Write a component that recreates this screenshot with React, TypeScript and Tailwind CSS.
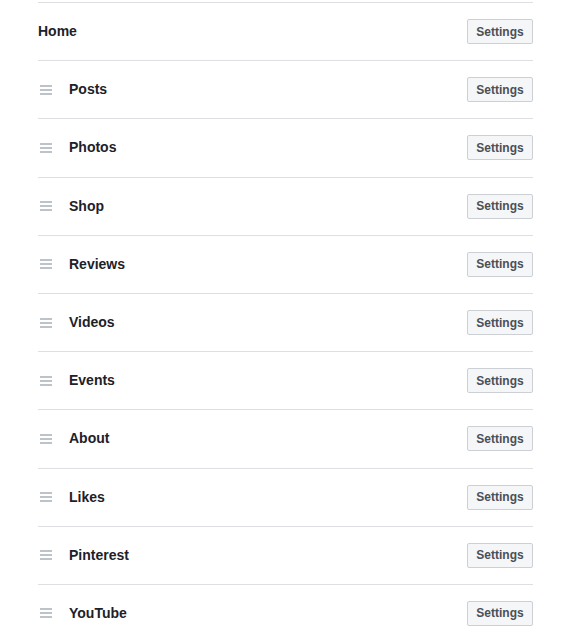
import React from 'react';

const tabs = ['Posts', 'Photos', 'Shop', 'Reviews', 'Videos', 'Events', 'About', 'Likes', 'Pinterest', 'YouTube'];

const DragHandle: React.FC = () => (
  <div className="flex w-3 flex-col gap-[2px]">
    <span className="h-[2px] bg-[#bec3c9]" />
    <span className="h-[2px] bg-[#bec3c9]" />
    <span className="h-[2px] bg-[#bec3c9]" />
  </div>
);

const SettingsButton: React.FC = () => (
  <button
    type="button"
    className="h-[25px] w-[66px] rounded-[2px] border border-[#ccd0d5] bg-[#f5f6f7] text-[12px] font-bold text-[#4b4f56]"
  >
    Settings
  </button>
);

const TabRow: React.FC<{ label: string; draggable?: boolean }> = ({ label, draggable = true }) => (
  <div className="flex h-[58.2px] items-center justify-between border-t border-[#dddfe2]">
    <div className="flex items-center">
      {draggable && (
        <div className="ml-[2px] mr-[17px]">
          <DragHandle />
        </div>
      )}
      <span className="text-[14px] font-bold text-[#1d2129]">{label}</span>
    </div>
    <SettingsButton />
  </div>
);

export default function App() {
  return (
    <div className="min-h-[640px] bg-white pt-[2px]" style={{ fontFamily: '"Liberation Sans", Arial, sans-serif' }}>
      <div className="ml-[38px] w-[495px]">
        <TabRow label="Home" draggable={false} />
        {tabs.map((t) => (
          <TabRow key={t} label={t} />
        ))}
      </div>
    </div>
  );
}
